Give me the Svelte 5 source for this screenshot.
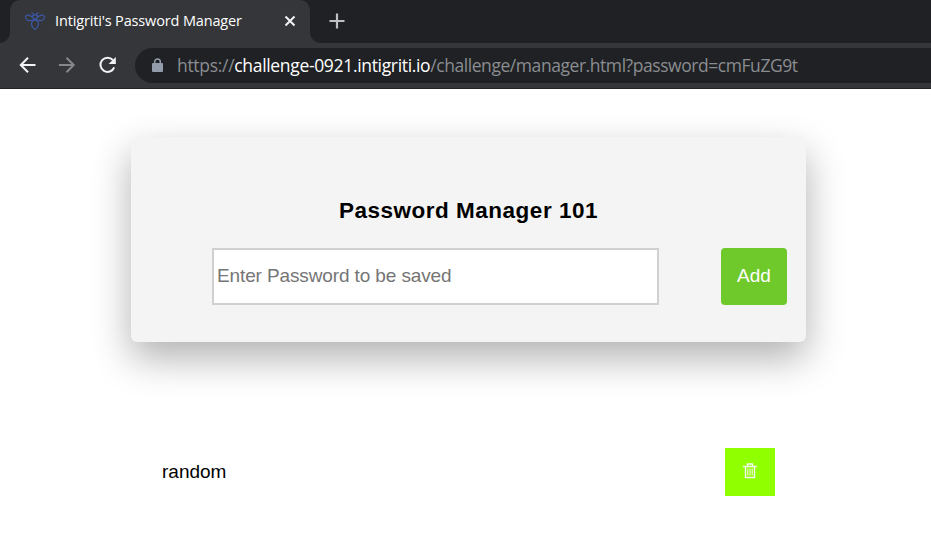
<script lang="ts">
  let password: string = '';
  let passwords: string[] = ['random'];

  function addPassword() {
    if (!password) return;
    passwords = [...passwords, password];
    password = '';
  }

  function removePassword(index: number) {
    passwords = passwords.filter((_, i) => i !== index);
  }
</script>

<div class="browser">
  <div class="tab-strip">
    <div class="previous-tab"></div>
    <div class="tab">
      <svg class="favicon" width="20" height="18" viewBox="0 0 20 18">
        <path d="M6.3.8l1.9.6 1 1.5M13.7.8l-1.9.6-1 1.5" />
        <path d="M7.2 5.2C7.2 3.7 8.4 2.8 10 2.8s2.8.9 2.8 2.4L10 7.5z" />
        <path d="M7.6 5.3C5 3 1.2 2.1.7 4.4.3 6.8 2 8.7 4 8.7c2 0 4-.6 6-1.5M12.4 5.3C15 3 18.8 2.1 19.3 4.4c.4 2.4-1.3 4.3-3.3 4.3-2 0-4-.6-6-1.5" />
        <path d="M10 8c-2.4.7-3.6 1.8-3.5 4 .1 2 1.5 4 3.5 5.4 2-1.4 3.4-3.4 3.5-5.4.1-2.2-1.1-3.3-3.5-4z" />
      </svg>
      <span class="tab-title">Intigriti's Password Manager</span>
      <svg class="close" width="12" height="12" viewBox="0 0 12 12">
        <path d="M1.5 1.5l9 9M10.5 1.5l-9 9" />
      </svg>
    </div>
    <svg class="new-tab" width="16" height="16" viewBox="0 0 16 16">
      <path d="M8 .5v15M.5 8h15" />
    </svg>
  </div>

  <div class="toolbar">
    <svg class="nav" width="18" height="18" viewBox="0 0 18 18">
      <path d="M17.5 9H3M10 1.8L2.8 9l7.2 7.2" />
    </svg>
    <svg class="nav disabled" width="18" height="18" viewBox="0 0 18 18">
      <path d="M1 9h14.5M8.5 1.8L15.7 9l-7.2 7.2" />
    </svg>
    <svg class="nav" width="18" height="18" viewBox="0 0 18 18">
      <path d="M16.2 11.3A7.1 7.1 0 1 1 15 4.2" />
      <path class="solid" d="M17.8 1v7.1h-7.2z" />
    </svg>
    <div class="address">
      <svg class="lock" width="11" height="15" viewBox="0 0 11 15">
        <rect x="0" y="5" width="11" height="9" rx="1" />
        <path d="M2.7 5.5V3.7a2.8 2.8 0 0 1 5.6 0v1.8" />
      </svg>
      <span class="url">https://<span class="host">challenge-0921.intigriti.io</span><span class="path">/challenge/manager.html?password=cmFuZG9t</span></span>
    </div>
  </div>
</div>

<main>
  <form class="card" on:submit|preventDefault={addPassword}>
    <h1>Password Manager 101</h1>
    <div class="fields">
      <input type="text" bind:value={password} placeholder="Enter Password to be saved" />
      <button class="add" type="submit">Add</button>
    </div>
  </form>

  <ul>
    {#each passwords as item, i}
      <li>
        <span>{item}</span>
        <button class="delete" aria-label="Delete" on:click={() => removePassword(i)}>
          <svg width="14" height="16" viewBox="0 0 14 16">
            <path d="M0 3.5h14M4.5 3V1h5v2M2.5 3.5v11h9v-11" />
            <path class="slats" d="M4.8 5.5v7M7 5.5v7M9.2 5.5v7" />
          </svg>
        </button>
      </li>
    {/each}
  </ul>
</main>

<style>
  :global(body) {
    margin: 0;
    background: #fff;
    overflow: hidden;
  }

  * {
    box-sizing: border-box;
  }

  svg {
    display: block;
    flex: none;
    fill: none;
  }

  .browser {
    height: 89px;
    background: #35363a;
    border-bottom: 1px solid #252427;
    font-family: 'Open Sans', 'Noto Sans', sans-serif;
  }

  .tab-strip {
    display: flex;
    height: 43px;
    background: #202124;
  }

  .previous-tab {
    width: 10px;
    background: radial-gradient(circle at 0 0, #202124 9.5px, #35363a 10px) 0 33px / 10px 10px no-repeat;
  }

  .tab {
    position: relative;
    display: flex;
    align-items: center;
    width: 300px;
    padding: 0 14px 1px 15px;
    border-radius: 10px 10px 0 0;
    background: #35363a;
  }

  .tab::after {
    content: '';
    position: absolute;
    left: 100%;
    bottom: 0;
    width: 10px;
    height: 10px;
    background: radial-gradient(circle at 100% 0, #202124 9.5px, #35363a 10px);
  }

  .favicon {
    stroke: #3c57a5;
    stroke-width: 1.2;
  }

  .tab-title {
    flex: 1;
    margin: -2px 0 0 10px;
    color: #fff;
    font-size: 14.5px;
    letter-spacing: -0.15px;
    white-space: nowrap;
  }

  .close {
    stroke: #f1f3f4;
    stroke-width: 2;
  }

  .new-tab {
    margin: 13px 0 0 19px;
    stroke: #bdc1c6;
    stroke-width: 2.2;
  }

  .toolbar {
    display: flex;
    align-items: center;
    gap: 22px;
    height: 45px;
    padding: 0 0 1px 18px;
  }

  .nav {
    stroke: #f1f3f4;
    stroke-width: 2;
  }

  .nav.disabled {
    stroke: #85878a;
  }

  .solid {
    fill: #f1f3f4;
    stroke: none;
  }

  .address {
    display: flex;
    flex: 1;
    align-items: center;
    height: 35px;
    margin-left: -3px;
    padding-left: 17px;
    border-radius: 18px 0 0 18px;
    background: #202124;
  }

  .lock {
    margin-top: 1px;
  }

  .lock rect {
    fill: #929cab;
  }

  .lock path {
    stroke: #929cab;
    stroke-width: 1.5;
  }

  .url {
    margin-left: 14px;
    color: #8a8d91;
    font-size: 17.5px;
    letter-spacing: -0.3px;
    white-space: nowrap;
  }

  .host {
    color: #fff;
    letter-spacing: -0.33px;
  }

  .path {
    letter-spacing: -0.44px;
  }

  main {
    padding: 48px 125px 0 131px;
    font-family: 'Liberation Sans', Arial, sans-serif;
    font-size: 19px;
  }

  .card {
    height: 205px;
    padding: 60px 19px 0 81px;
    border-radius: 6px;
    background: #f4f4f4;
    box-shadow: 0 16px 38px rgba(0, 0, 0, 0.31);
  }

  h1 {
    margin: 0 62px 0 0;
    font-size: 22.5px;
    line-height: 28px;
    letter-spacing: 0.5px;
    text-align: center;
    white-space: nowrap;
  }

  .fields {
    display: flex;
    justify-content: space-between;
    margin-top: 23px;
  }

  input {
    width: 447px;
    height: 57px;
    padding: 0 4px 2px 3px;
    border: 2px solid #d0d0d0;
    outline: none;
    background: #fff;
    font: inherit;
    letter-spacing: -0.12px;
  }

  input::placeholder {
    color: #757575;
  }

  button {
    display: flex;
    align-items: center;
    justify-content: center;
    padding: 0 0 2px;
    border: none;
    color: #fff;
    font: inherit;
    cursor: pointer;
  }

  .add {
    width: 66px;
    height: 57px;
    border-radius: 4px;
    background: #70c92a;
  }

  ul {
    margin: 106px 31px 0;
    padding: 0;
    list-style: none;
  }

  li {
    display: flex;
    align-items: center;
    justify-content: space-between;
    height: 48px;
  }

  .delete {
    width: 50px;
    height: 48px;
    background: #90ff00;
  }

  .delete svg {
    stroke: #f4f4f4;
    stroke-width: 1.4;
  }

  .delete .slats {
    stroke-width: 1;
  }
</style>
